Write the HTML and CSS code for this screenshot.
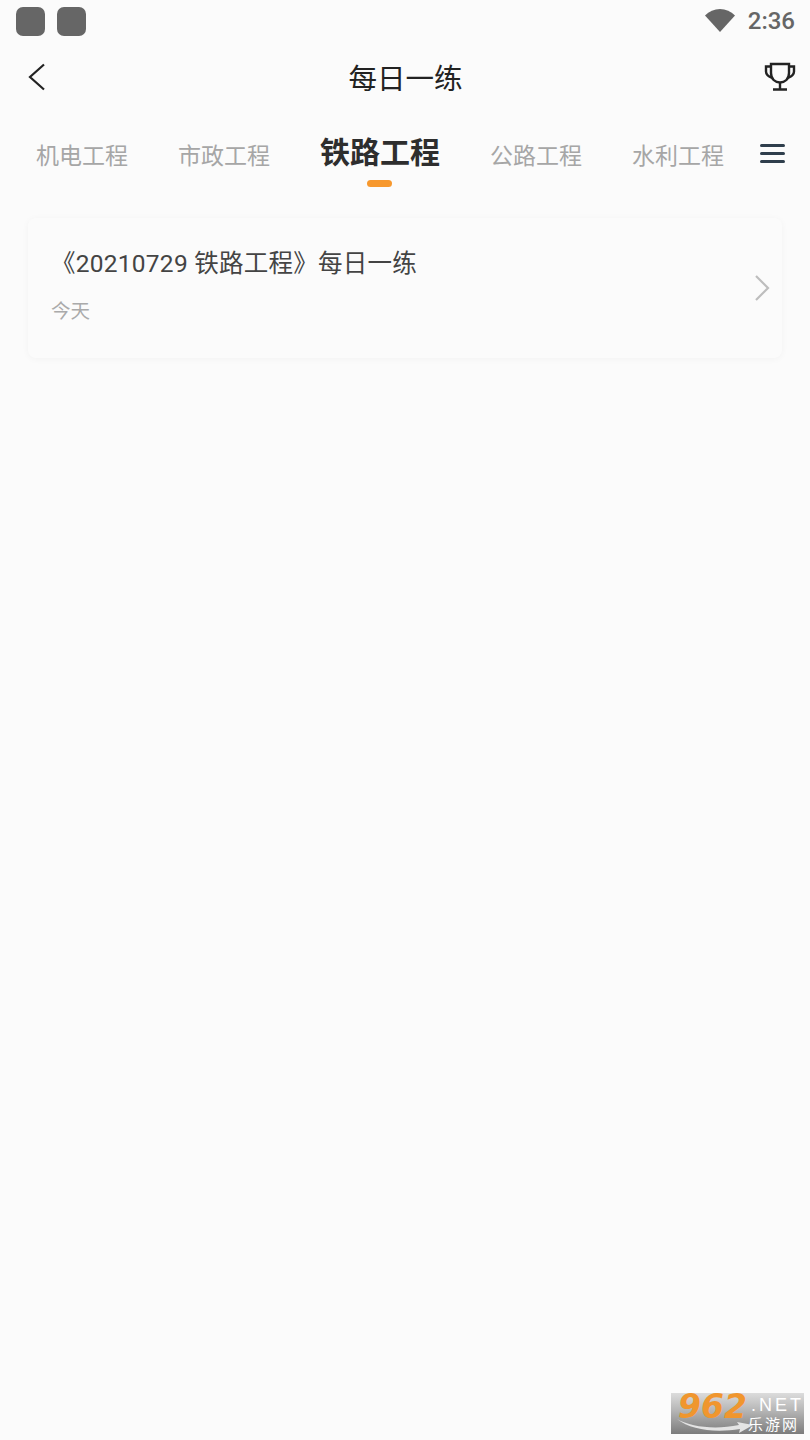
FILE: index.html
```html
<!DOCTYPE html>
<html lang="zh-CN">
<head>
    <meta charset="UTF-8">
    <meta name="viewport" content="width=device-width, initial-scale=1.0">
    <title>每日一练</title>
    <link rel="stylesheet" href="styles.css">
</head>
<body>
    <div class="status-bar">
        <div class="status-apps">
            <div class="app-dot"></div>
            <div class="app-dot"></div>
        </div>
        <div class="status-right">
            <svg class="wifi" width="30" height="24" viewBox="0 0 30 24"><path d="M0 7.500C4 3.200 9.300 1 15 1s11 2.200 15 6.500L15 24z" fill="#666"/></svg>
            <span class="time">2:36</span>
        </div>
    </div>

    <div class="app-bar">
        <svg class="back" width="20" height="30" viewBox="0 0 20 30"><path d="M17 2.500L3 15l14 12.500" fill="none" stroke="#222" stroke-width="2.200"/></svg>
        <div class="page-title">每日一练</div>
        <svg class="trophy" width="32" height="30" viewBox="0 0 32 30" fill="none" stroke="#222" stroke-width="2.400">
            <path d="M7 2h18v9c0 6-4 9.500-9 9.500S7 17 7 11z"/>
            <path d="M7 4.500H2v5c0 3 2.500 5 6 6.500M25 4.500h5v5c0 3-2.500 5-6 6.500"/>
            <path d="M16 20.500V27M9 27.500h14"/>
        </svg>
    </div>

    <div class="tabs">
        <div class="tab">机电工程</div>
        <div class="tab">市政工程</div>
        <div class="tab active">铁路工程</div>
        <div class="tab">公路工程</div>
        <div class="tab">水利工程</div>
        <div class="menu-icon">
            <span></span>
            <span></span>
            <span></span>
        </div>
    </div>

    <div class="card">
        <div class="card-text">
            <div class="card-title">《20210729 铁路工程》每日一练</div>
            <div class="card-date">今天</div>
        </div>
        <svg class="chevron" width="16" height="28" viewBox="0 0 16 28"><path d="M2 2l12 12L2 26" fill="none" stroke="#bdbdbd" stroke-width="2.200"/></svg>
    </div>

    <div class="watermark">
        <svg class="swoosh" width="76" height="16" viewBox="0 0 76 16"><path d="M0 1c14 8 38 11 62 6l-2-3 16 3-14 8 1-4C38 15 14 12 0 1z" fill="#e4e4e4"/></svg>
        <span class="wm-num">962</span>
        <span class="wm-net">.NET</span>
        <span class="wm-cn">乐游网</span>
    </div>
</body>
</html>
```

FILE: styles.css
```css
body {
    margin: 0;
    width: 810px;
    height: 1440px;
    overflow: hidden;
    position: relative;
    background: #fbfbfb;
    font-family: "Noto Sans CJK SC", "Noto Sans", sans-serif;
}

.status-bar {
    height: 42px;
    display: flex;
    justify-content: space-between;
    align-items: center;
    padding: 0 15px 0 16px;
}

.status-apps {
    display: flex;
    gap: 12px;
}

.app-dot {
    width: 29px;
    height: 29px;
    border-radius: 7px;
    background: #666;
}

.status-right {
    display: flex;
    align-items: center;
    gap: 13px;
}

.wifi {
    margin-top: -3px;
}

.time {
    font-family: Roboto, sans-serif;
    font-size: 24px;
    font-weight: 500;
    color: #666;
    line-height: 44px;
}

.app-bar {
    height: 70px;
    display: flex;
    justify-content: space-between;
    align-items: center;
    padding: 0 14px 0 27px;
}

.page-title {
    font-size: 28.500px;
    color: #222;
    flex: 1;
    text-align: center;
    line-height: 66px;
}

.tabs {
    height: 84px;
    display: flex;
    align-items: center;
    gap: 50px;
    padding-left: 36px;
}

.tab {
    font-size: 23px;
    color: #a6a6a6;
    line-height: 34px;
    position: relative;
}

.tab.active {
    font-size: 30px;
    font-weight: 700;
    color: #2e2e2e;
    line-height: 40px;
    margin-top: -8px;
}

.tab.active::after {
    content: "";
    position: absolute;
    left: 47px;
    bottom: -17px;
    width: 25px;
    height: 7px;
    border-radius: 4px;
    background: #f7982d;
}

.menu-icon {
    display: flex;
    flex-direction: column;
    gap: 5px;
    margin-left: -14px;
    margin-top: -2px;
}

.menu-icon span {
    display: block;
    width: 25px;
    height: 3px;
    background: #2f3e4c;
    border-radius: 2px;
}

.card {
    margin: 22px 28px 0;
    height: 140px;
    box-sizing: border-box;
    padding: 0 12px 0 23px;
    display: flex;
    justify-content: space-between;
    align-items: center;
    background: #fbfbfb;
    border-radius: 8px;
    box-shadow: 0 1px 7px rgba(0, 0, 0, 0.04);
}

.card-title {
    font-family: Roboto, "Noto Sans CJK SC", sans-serif;
    font-size: 24.500px;
    letter-spacing: 0.250px;
    color: #444;
    line-height: 34px;
    margin-bottom: 15px;
    margin-top: -5px;
}

.card-date {
    font-size: 19.500px;
    color: #aaa;
    line-height: 28px;
}

.watermark {
    position: absolute;
    left: 671px;
    top: 1393px;
    width: 133px;
    height: 41px;
    background: linear-gradient(#dcdcdc, #b8b8b8 40%, #7c7c7c);
}

.swoosh {
    position: absolute;
    left: 6px;
    top: 25px;
}

.wm-num {
    position: absolute;
    left: 7px;
    top: 0;
    font-family: "DejaVu Sans", sans-serif;
    font-size: 33px;
    font-weight: 700;
    font-style: italic;
    color: #f0962e;
    line-height: 28px;
}

.wm-net {
    position: absolute;
    left: 80px;
    top: 3px;
    font-family: "Liberation Sans", sans-serif;
    font-size: 18px;
    letter-spacing: 3px;
    color: #fff;
    line-height: 18px;
}

.wm-cn {
    position: absolute;
    left: 77px;
    top: 22px;
    font-size: 15px;
    letter-spacing: 2px;
    color: #fff;
    line-height: 18px;
}
```
